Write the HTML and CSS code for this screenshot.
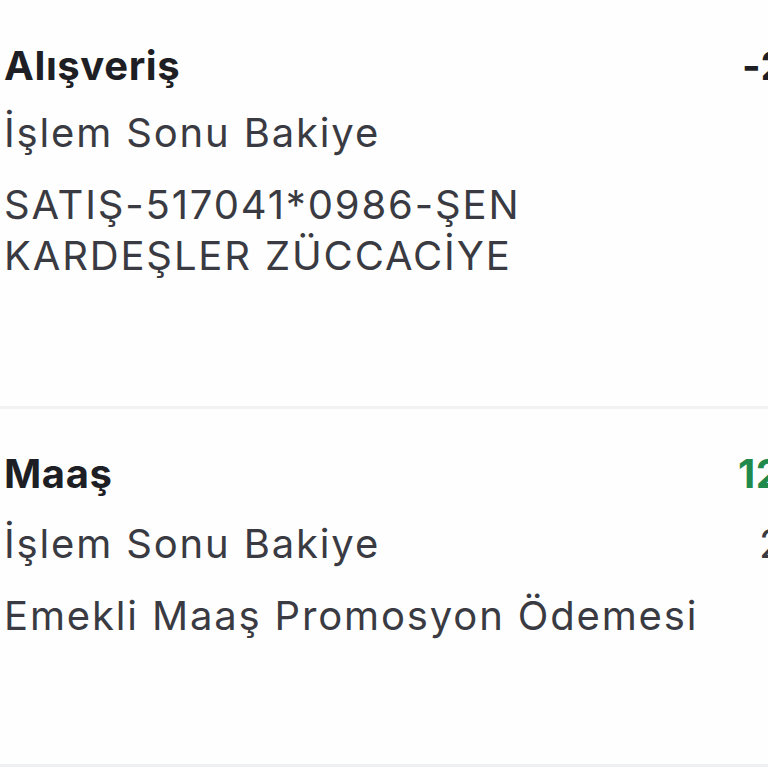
FILE: index.html
```html
<!DOCTYPE html>
<html lang="tr">
<head>
<meta charset="utf-8">
<link rel="stylesheet" href="styles.css">
</head>
<body>
<div class="list">
  <div class="item first">
    <div class="line">
      <span class="title">Alışveriş</span>
      <span class="amount neg">-250,00 TL</span>
    </div>
    <div class="line">
      <span class="sub">İşlem Sonu Bakiye</span>
      <span class="bal"></span>
    </div>
    <div class="desc">SATIŞ-517041*0986-ŞEN<br>KARDEŞLER ZÜCCACİYE</div>
  </div>
  <div class="item second">
    <div class="line">
      <span class="title">Maaş</span>
      <span class="amount pos">12.500,00 TL</span>
    </div>
    <div class="line">
      <span class="sub">İşlem Sonu Bakiye</span>
      <span class="bal">2</span>
    </div>
    <div class="desc">Emekli Maaş Promosyon Ödemesi</div>
  </div>
</div>
</body>
</html>
```
FILE: styles.css
```css
html, body {
  margin: 0;
  padding: 0;
  background: #fefefe;
  overflow: hidden;
  width: 768px;
  height: 768px;
}
body {
  font-family: Inter, "Noto Sans", sans-serif;
  color: #2a2b31;
}
.list {
  width: 768px;
}
.item {
  padding: 0 0 0 4px;
  border-bottom: 3px solid #f2f2f3;
  overflow: hidden;
}
.first {
  padding-top: 40px;
  height: 366px;
}
.second {
  padding-top: 39px;
  height: 316px;
  border-bottom-color: #eef0f3;
}
.line {
  display: flex;
  white-space: nowrap;
  position: relative;
}
.title {
  font-size: 40px;
  font-weight: 700;
  color: #1e1f24;
  line-height: 52px;
  letter-spacing: 0.6px;
}
.sub, .desc {
  font-size: 40px;
  font-weight: 400;
  color: #3a3b42;
  letter-spacing: 1.85px;
}
.line .sub {
  line-height: 54px;
  margin-top: 14px;
}
.second .line .sub {
  margin-top: 17px;
}
.desc {
  margin-top: 19px;
  line-height: 51px;
}
.amount {
  position: absolute;
  left: 738px;
  font-size: 40px;
  font-weight: 700;
  line-height: 52px;
  letter-spacing: 0.6px;
}
.neg { color: #1e1f24; }
.pos { left: 734px; color: #1f8a4c; }
.bal {
  position: absolute;
  left: 755px;
  top: 17px;
  font-size: 40px;
  line-height: 54px;
  color: #3a3b42;
}
```
